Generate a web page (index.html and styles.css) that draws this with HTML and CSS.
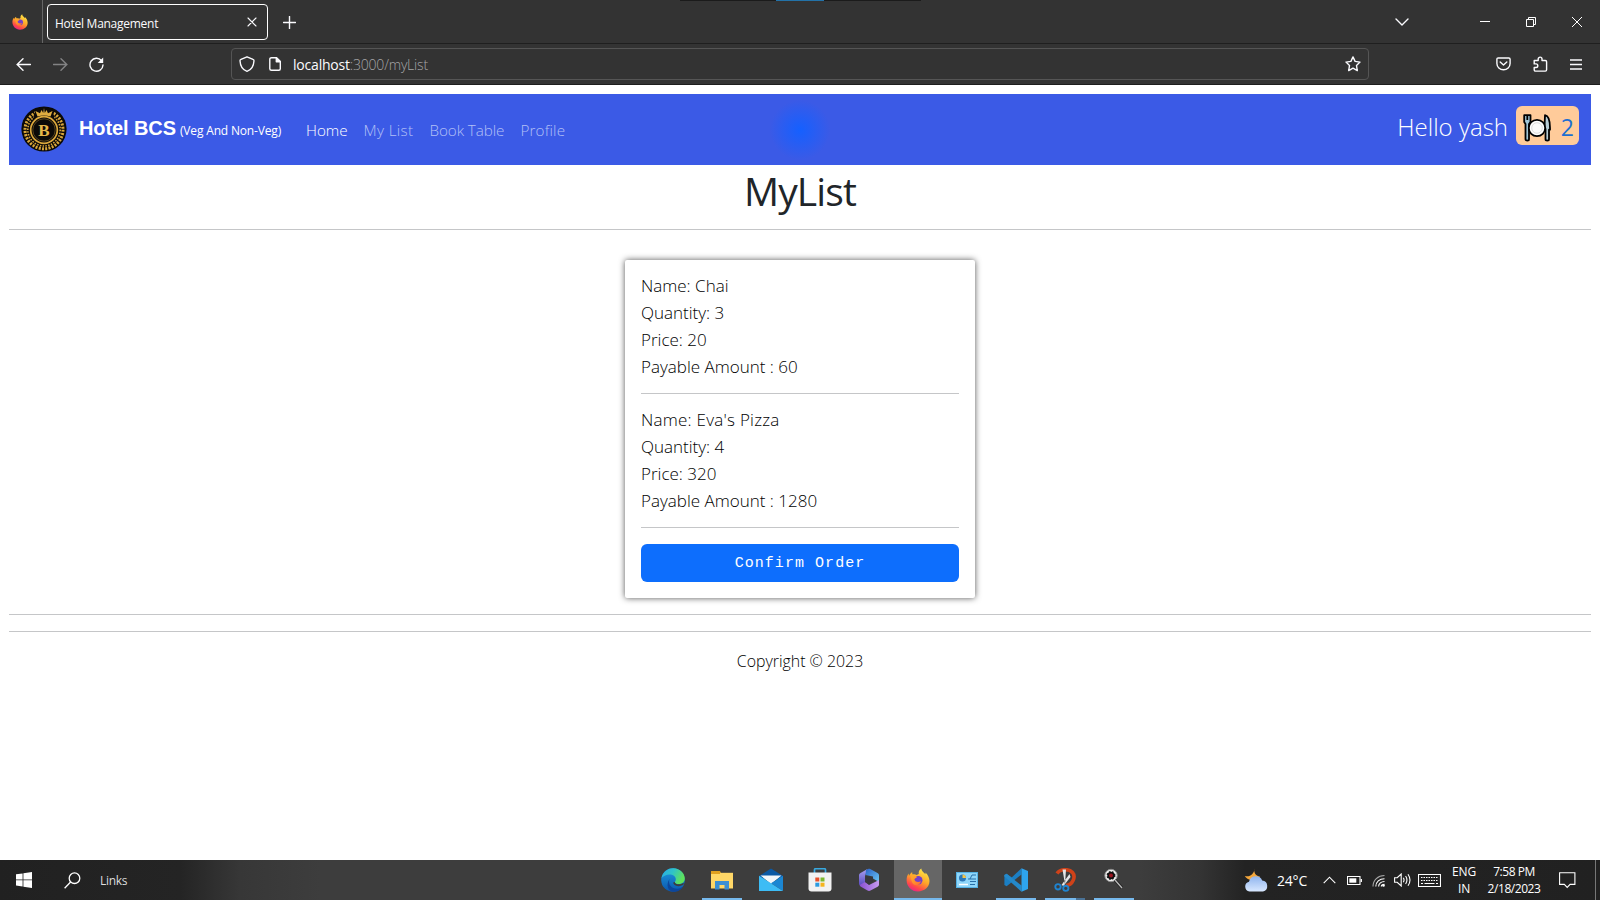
FILE: index.html
```html
<!DOCTYPE html>
<html lang="en">
<head>
<meta charset="utf-8">
<title>Hotel Management</title>
<link rel="stylesheet" href="styles.css">
</head>
<body>
<svg width="0" height="0" class="defs" aria-hidden="true">
  <defs>
    <linearGradient id="fx" x1=".8" y1="0" x2=".3" y2="1"><stop offset="0" stop-color="#fff04a"/><stop offset=".5" stop-color="#ffa428"/><stop offset=".8" stop-color="#ff4a48"/><stop offset="1" stop-color="#e9208a"/></linearGradient>
    <linearGradient id="fxb" x1="0" y1="0" x2="1" y2="1"><stop offset="0" stop-color="#ffb028"/><stop offset="1" stop-color="#ff6a30"/></linearGradient>
    <linearGradient id="edgeG" x1="0" y1="0" x2="1" y2=".4"><stop offset="0" stop-color="#2aa9e8"/><stop offset=".5" stop-color="#2fc3c8"/><stop offset="1" stop-color="#5fe25a"/></linearGradient>
    <linearGradient id="edgeB" x1="0" y1="0" x2="0" y2="1"><stop offset="0" stop-color="#1e9be0"/><stop offset="1" stop-color="#0b56ad"/></linearGradient>
    <linearGradient id="cloud" x1="0" y1="0" x2="0" y2="1"><stop offset="0" stop-color="#8fb4ee"/><stop offset="1" stop-color="#d8e8ff"/></linearGradient>
    <linearGradient id="m1" x1="0" y1="0" x2="0" y2="1"><stop offset="0" stop-color="#a9a0f2"/><stop offset="1" stop-color="#5b4cc0"/></linearGradient>
    <linearGradient id="m2" x1="0" y1="0" x2="1" y2="1"><stop offset="0" stop-color="#2a62c8"/><stop offset="1" stop-color="#6cc8f5"/></linearGradient>
    <linearGradient id="m3" x1="0" y1="0" x2="1" y2="0"><stop offset="0" stop-color="#8a50d0"/><stop offset="1" stop-color="#c79bf0"/></linearGradient>
    <symbol id="firefox" viewBox="0 0 24 24">
      <path d="M12 23.500C5.500 23.500 .8 18.500 .6 12.500.5 9.500 1.500 7 2.600 5.600L3 8c.7-1.700 1.900-3.200 3.200-3.800-.1 1 .1 1.800.5 2.300 1.100-.3 2.800-.2 3.900.5l2.200-1C12.300 3.600 13.500 1.500 15.300.4c.1 2 1.400 3.100 2.900 4.500l1.200 1.300c.2-.7.1-1.200 0-1.700 2.500 2.100 4.100 5.500 4.100 8.600 0 6-5.200 10.400-11.500 10.400z" fill="url(#fx)"/>
      <circle cx="12.300" cy="12.300" r="4.200" fill="#7540c8"/>
      <path d="M5.500 8.500c2-1.500 3.800-.8 5.500.6-.5 1.200-2.600 1.200-2.700 2.500 1 2.600 4 3.200 6.700 1.700-1 3.300-3.500 4.300-5.500 3.800-3-.7-4.800-4.500-4-8.600z" fill="url(#fxb)"/>
    </symbol>
  </defs>
</svg>

<header class="chrome">
  <div class="snap-edge"><i></i></div>
  <div class="tabs">
    <div class="pin"><svg width="16" height="16"><use href="#firefox"/></svg></div>
    <div class="tab"><span class="t-tab">Hotel Management</span>
      <svg width="10" height="10" viewBox="0 0 10 10" class="ln"><path d="M1 1l8 8M9 1l-8 8"/></svg></div>
    <svg class="plus ln" width="13" height="13" viewBox="0 0 13 13"><path d="M6.500 .5v12M.5 6.500h12"/></svg>
    <div class="win">
      <svg class="ln chev" width="14" height="8" viewBox="0 0 14 8"><path d="M1 1l6 6 6-6"/></svg>
      <svg class="thin min" width="10" height="11" viewBox="0 0 10 11"><path d="M0 5.500h10"/></svg>
      <svg class="thin res" width="10" height="10" viewBox="0 0 10 10"><path d="M.5 2.500h7v7h-7zM2.500 2.500v-2h7v7h-2"/></svg>
      <svg class="thin cls" width="10" height="10" viewBox="0 0 10 10"><path d="M0 0l10 10M10 0L0 10"/></svg>
    </div>
  </div>
  <div class="toolbar">
    <div class="nav-btns">
      <svg class="ln" width="15" height="13" viewBox="0 0 15 13"><path d="M14.500 6.500H1M7 .8L1.200 6.500 7 12.200"/></svg>
      <svg class="ln dim" width="15" height="13" viewBox="0 0 15 13"><path d="M.5 6.500H14M8 .8l5.800 5.700L8 12.200"/></svg>
      <svg class="ln" width="15" height="15" viewBox="0 0 15 15"><path d="M12.600 3.700A6.500 6.500 0 1 0 14 8"/><path d="M14.200 .6v5.500H8.700z" fill="#fbfbfe" stroke="none"/></svg>
    </div>
    <div class="url">
      <svg class="ln" width="16" height="16" viewBox="0 0 16 16"><path d="M8 .8l6 2.500c.8.300 1 .8 1 1.400C14.700 10 12 14 8 15.300 4 14 1.300 10 1 4.700c0-.6.300-1.100 1-1.400z"/></svg>
      <svg class="ln page" width="12" height="14" viewBox="0 0 12 14"><path d="M2.500 .7H7.500L11.300 4.500v7.300c0 .9-.6 1.500-1.500 1.500H2.500C1.500 13.300.8 12.700.8 11.800V2.200C.8 1.300 1.500.7 2.500.7z"/><path d="M7.300.7v4h4z" fill="#fbfbfe"/></svg>
      <span class="addr">localhost<span>:3000/myList</span></span>
      <svg class="ln star" width="16" height="16" viewBox="0 0 16 16"><path d="M8 .9l2.100 4.500 4.900.7-3.500 3.500.8 5L8 12.200l-4.300 2.400.8-5L1 6.100l4.900-.7z"/></svg>
    </div>
    <div class="ext">
      <svg class="ln" width="15" height="14" viewBox="0 0 15 14"><path d="M2.200 1h10.600c.8 0 1.300.5 1.300 1.300V6.500a6.600 6.300 0 0 1-13.200 0V2.300C.9 1.500 1.400 1 2.200 1zM4.200 5l3.300 3 3.300-3"/></svg>
      <svg class="ln" width="15" height="16" viewBox="0 0 15 16"><path d="M1.200 4.500h4V3a1.900 1.900 0 0 1 3.800 0v1.500h3.300c.8 0 1.300.4 1.300 1.200v8c0 .9-.5 1.400-1.300 1.400H2.500c-.8 0-1.300-.5-1.300-1.400v-2.200H3a1.800 1.800 0 0 0 0-3.600H1.200z"/></svg>
      <svg class="ln" width="12" height="11" viewBox="0 0 12 11"><path d="M0 1h12M0 5.500h12M0 10h12"/></svg>
    </div>
  </div>
</header>

<main>
  <nav class="navbar">
    <svg class="logo" width="46" height="46" viewBox="0 0 46 46">
      <circle cx="23" cy="23" r="22.600" fill="#0c0a08"/>
      <g fill="none" stroke="#d9a63a">
        <circle cx="23" cy="23.800" r="19" stroke-width="3" stroke-dasharray="2 1.300"/>
        <circle cx="23" cy="23.800" r="16.200" stroke-width="1.600" stroke-dasharray="1.500 1.300"/>
      </g>
      <path d="M12.500 13L14.500 3.500 20 1h6l5.500 2.500 2 9.500z" fill="#0c0a08"/>
      <path d="M16.500 10.500L14.500 5l4.500 2.300L20.500 4l1.700 3L23 2l.8 5 1.700-3L27 7.300 31.500 5l-2 5.500q-6.500-2-13 0z" fill="#e0ad40"/>
      <circle cx="23" cy="24" r="13.300" fill="#0c0a08" stroke="#dba83c" stroke-width="1.700"/>
      <circle cx="23" cy="24" r="11.200" fill="none" stroke="#8a6a28" stroke-width=".6"/>
      <text x="23" y="30" text-anchor="middle" class="logo-b">B</text>
    </svg>
    <span class="brand">Hotel BCS</span><span class="veg">(Veg And Non-Veg)</span>
    <ul class="links"><li class="on">Home</li><li class="mine">My List</li><li class="book">Book Table</li><li>Profile</li></ul>
    <span class="hello">Hello yash</span>
    <span class="badge">
      <svg width="28" height="28" viewBox="0 0 28 28">
        <g stroke="#000" stroke-width="1.800" stroke-linejoin="round">
          <path d="M1.200 1.200H7.500V8L6 10v15.200c0 1.800-3.500 1.800-3.500 0V10L1.200 8z" fill="#9fc6d8"/>
          <path d="M4.300 1v5" fill="none"/>
          <path d="M22 1.200c4 .5 5.200 5 5 14.500h-1v9.500c0 1.800-3.500 1.800-3.500 0V15L21.500 14z" fill="#b7cdd6"/>
          <circle cx="14" cy="14" r="8.200" fill="#fff"/>
        </g>
        <circle cx="14" cy="14" r="5.300" fill="#fafafa" stroke="#dcdcdc"/>
      </svg><b>2</b>
    </span>
  </nav>
  <h1>MyList</h1>
  <hr class="h-title">
  <section class="card">
    <div class="item"><p>Name: Chai</p><p>Quantity: 3</p><p>Price: 20</p><p>Payable Amount : 60</p></div>
    <hr>
    <div class="item"><p class="eva">Name: Eva's Pizza</p><p>Quantity: 4</p><p>Price: 320</p><p>Payable Amount : 1280</p></div>
    <hr>
    <button>Confirm Order</button>
  </section>
  <hr class="h-a"><hr class="h-b">
  <footer>Copyright © 2023</footer>
</main>

<div class="taskbar">
  <div class="start">
    <svg width="16" height="16" viewBox="0 0 16 16" fill="#fff"><path d="M0 2.300l6.600-.9v6.100H0zM7.400 1.200L16 0v7.500H7.400zM0 8.300h6.600v6.200L0 13.600zM7.400 8.300H16V16l-8.600-1.200z"/></svg>
    <svg class="find" width="17" height="17" viewBox="0 0 17 17" fill="none" stroke="#fff" stroke-width="1.300"><circle cx="10.500" cy="6.200" r="5.300"/><path d="M6.600 10L.6 16.300"/></svg>
    <span>Links</span>
  </div>
  <div class="apps">
    <div class="app"><svg width="24" height="24" viewBox="0 0 24 24"><circle cx="12" cy="12" r="11.800" fill="url(#edgeB)"/><path d="M.5 10C2 3.500 7 .2 12.300.2 19 .2 23.800 5.500 23.800 10.500c0 3.300-2.600 5.500-6 5.500-2.500 0-4-1-4-1.800 0-.8 1-1.100 1-3C14.800 8.500 12 6.500 8.500 6.500 5 6.500 2 8.500.5 10z" fill="url(#edgeG)"/><path d="M8.500 11c-2 6 3 11 9.500 9.500 2-.5 3.500-1.500 4-2-2 4-6 5.500-10 5.300C7 23 4.500 17 8.500 11z" fill="#0d469b"/><path d="M13.800 14.200c0 2 5 3 8.500.8l.7 1c-2.500 2.800-8.500 3-10.500-.2-.6-1 .2-2 1.300-1.600z" fill="#3d3d3d"/></svg></div>
    <div class="app run"><svg width="22" height="20" viewBox="0 0 22 20"><path d="M0 1h9l1 2h-10z" fill="#d9981e"/><path d="M0 2.800h22V18.500H0z" fill="#ffd767"/><path d="M0 1h9v3H0z" fill="#e0a020"/><path d="M4 19.500v-8.500h14v8.500h-4.500v-4.500h-5v4.500z" fill="#3a8fd4"/></svg></div>
    <div class="app"><svg width="24" height="24" viewBox="0 0 24 24"><path d="M0 8L12 .5 24 8v3H0z" fill="#0c59a4"/><path d="M1.500 7.500h21L12 16z" fill="#f3f6fa"/><path d="M24 7.700V23L12 15.300z" fill="#1b86d2"/><path d="M0 7.700L24 23H0z" fill="#3dbcf5"/></svg></div>
    <div class="app"><svg width="24" height="24" viewBox="0 0 24 24"><path d="M6.500 6.500V1.800c0-.7.500-1.100 1.100-1.100h8.800c.6 0 1.100.4 1.100 1.100v4.700" fill="none" stroke="#38a9e0" stroke-width="1.700"/><path d="M.5 4.500h23v16c0 2-1.200 3-3 3h-17c-1.800 0-3-1-3-3z" fill="#f2f2f2"/><path d="M7.300 9.500h4v4h-4z" fill="#e8502a"/><path d="M12.500 9.500h4v4h-4z" fill="#7cb82f"/><path d="M7.300 14.700h4v4h-4z" fill="#2b9be0"/><path d="M12.500 14.700h4v4h-4z" fill="#f5b51e"/></svg></div>
    <div class="app"><svg width="22" height="24" viewBox="0 0 22 24"><path d="M9.500 1L2.500 5C1.500 5.500 1 6.500 1 7.500V16c0 1 1 1.500 2 1l4-2.300V8z" fill="url(#m1)"/><path d="M8 2l2-1c.8-.4 1.500-.4 2.200 0L19.500 5c1 .6 1.500 1.500 1.500 2.500V14l-6-3.500V8.500L7.500 7z" fill="url(#m2)"/><path d="M1.500 17l5.500-3 4 3 10-5v4.500c0 1-.5 1.700-1.400 2.200L12.500 22.600c-1 .5-2 .5-3 0L2.500 18.500z" fill="url(#m3)"/><path d="M8 8.500l7 .5v4.500L11 16.500 7.500 14.300z" fill="#37373e"/></svg></div>
    <div class="app run active"><svg width="24" height="24"><use href="#firefox"/></svg></div>
    <div class="app"><svg width="22" height="16" viewBox="0 0 22 16"><rect x=".5" y=".5" width="21" height="15" fill="#8fd6fa" stroke="#56b2e4"/><circle cx="6.500" cy="6" r="3.500" fill="#2d78b8"/><path d="M6.500 6V2.500A3.500 3.500 0 0 1 10 6z" fill="#f2c34b"/><path d="M12 7h2l2-4h4M14 7h6M14 9.500h6" stroke="#276fa8" fill="none"/><path d="M3 12.500h9" stroke="#fff" stroke-width="1.500"/><path d="M14 12.500h5" stroke="#276fa8"/></svg></div>
    <div class="app run"><svg width="24" height="24" viewBox="0 0 24 24"><path d="M17.500.3L7.700 9.600 2.600 5.800.4 7v10l2.200 1.200L17.500 6.500z" fill="#1b7fc4"/><path d="M.4 7l2.200-1.200L17.500 17.500v6.200L.4 8.500z" fill="#2489ca"/><path d="M17.500.2L24 3v18l-6.500 2.800z" fill="#2ea4ee"/></svg></div>
    <div class="app run split"><svg width="22" height="24" viewBox="0 0 22 24"><path d="M3 5.500C6 .8 15 .5 18.500 4.500S19 17 12 17.500" fill="none" stroke="#cf4219" stroke-width="3.600"/><path d="M8.500 1.500h3.500l-1 15zM15.500 6l-8 11 2 1 7-9z" fill="#e4e6e8"/><circle cx="4" cy="18.800" r="2.700" fill="none" stroke="#1f83cf" stroke-width="1.900"/><circle cx="11.800" cy="20.300" r="2.600" fill="none" stroke="#1f83cf" stroke-width="1.900"/></svg></div>
    <div class="app run"><svg class="lens" width="20" height="22" viewBox="0 0 20 22"><circle cx="8" cy="7.500" r="6.200" fill="#eee" stroke="#8d8d8d"/><circle cx="8" cy="7.500" r="3.700" fill="#111" stroke="#111" stroke-width="1.500" stroke-dasharray="1.500 1.500"/><circle cx="8" cy="7.500" r="2" fill="#9c1420"/><path d="M12 12l7 8" stroke="#222" stroke-width="3"/><path d="M12 12l7 8" stroke="#bbb" stroke-width="1.400"/></svg></div>
  </div>
  <div class="tray">
    <svg class="moon" width="25" height="24" viewBox="0 0 25 24"><path d="M10.500.5C9.500 4 11.500 8 16 8.500 14.500 12 9 13.500 5 11.500 3 10.500 1 9 .8 8 6 9.500 10.500 5.500 10.500.5z" fill="#f3a63b"/><path d="M5.500 23.500a5 5 0 0 1-.5-9.800 7 7 0 0 1 13.200-1.200A5.600 5.600 0 0 1 19 23.500z" fill="url(#cloud)"/></svg>
    <span class="temp">24°C</span>
    <svg class="tr up" width="13" height="8" viewBox="0 0 13 8"><path d="M.7 7.200l5.800-6 5.800 6"/></svg>
    <svg class="tr bat" width="15" height="9" viewBox="0 0 15 9"><path d="M.5.500h12.500v8H.5zM14.400 3v3"/><path d="M2.300 2.300h7v4.400h-7z" fill="#fff" stroke="none"/></svg>
    <svg class="tr wifi" width="13" height="13" viewBox="0 0 13 13"><path d="M1 12.500C1 6 6 1.500 12.500 1.500" opacity=".6"/><path d="M3.800 12.500c0-4.500 3.700-7.800 8.700-7.800M6.600 12.500c0-3 2.600-5 5.900-5M9.300 12.500c0-1.500 1.300-2.300 3.200-2.300"/><circle cx="11.500" cy="11.500" r="1.300" fill="#fff" stroke="none"/></svg>
    <svg class="tr vol" width="17" height="14" viewBox="0 0 17 14"><path d="M.6 4.700h2.600l4-3.700v12l-4-3.700H.6zM9.300 4.800q1.500 2.200 0 4.400M11.600 3q2.700 4 0 8M14 1.200q4 5.800 0 11.600"/></svg>
    <svg class="tr kb" width="23" height="13" viewBox="0 0 23 13"><path d="M.5.500h22v12H.5z"/><path d="M3 3.500h17M3 6.500h17" stroke-dasharray="1.500 1"/><path d="M3 9.500h2M6.500 9.500h10M18 9.500h2"/></svg>
    <div class="lang"><span>ENG</span><span>IN</span></div>
    <div class="clock"><span>7:58 PM</span><span>2/18/2023</span></div>
    <svg class="tr note" width="17" height="17" viewBox="0 0 17 17"><path d="M.6.700h15.300v11.700h-4.800L8.200 15.500 5.300 12.400H.6z"/></svg>
    <i class="peek"></i>
  </div>
</div>
</body>
</html>
```
FILE: styles.css
```css
* { box-sizing: border-box; margin: 0; padding: 0; }
body { width: 1600px; height: 900px; overflow: hidden; display: flex; flex-direction: column; background: #fff; color: #212529; font-family: "Open Sans", "Noto Sans", sans-serif; }
svg { display: block; flex: none; }
span, b, p, li { white-space: nowrap; }
.defs { position: absolute; }
.ln { fill: none; stroke: #fbfbfe; stroke-width: 1.4; stroke-linejoin: round; stroke-linecap: round; }
.thin { fill: none; stroke: #fff; stroke-width: 1; }
.dim { opacity: .4; }

/* Browser frame */
.chrome { height: 85px; background: #333; border-bottom: 1px solid #1d1d1d; position: relative; flex: none; color: #fbfbfe; }
.snap-edge { position: absolute; left: 680px; top: 0; width: 241px; height: 1px; background: #1b1b1b; }
.snap-edge i { display: block; width: 48px; height: 1px; margin-left: 96px; background: #2372a8; }
.tabs { height: 44px; border-bottom: 1px solid #1f1f1f; display: flex; }
.pin { width: 43px; height: 43px; border-right: 1px solid #666; padding: 14px 0 0 12px; }
.tab { width: 221px; height: 36px; margin: 4px 0 0 4px; border: 1px solid #fff; border-radius: 4px; display: flex; align-items: center; justify-content: space-between; padding: 0 10px 0 7px; }
.tab svg { stroke-width: 1.1; }
.t-tab { font-size: 12px; letter-spacing: -.27px; padding-top: 2px; }
.plus { margin: 16px 0 0 15px; }
.win { display: flex; align-items: center; margin-left: auto; height: 43px; padding-right: 18px; }
.min { margin-left: 71px; }
.res { margin-left: 36px; }
.cls { margin-left: 36px; }
.toolbar { display: flex; height: 40px; align-items: center; }
.nav-btns { width: 231px; padding-left: 16px; display: flex; align-items: center; gap: 21.5px; }
.url { width: 1138px; height: 32px; border: 1px solid #555; border-radius: 4px; display: flex; align-items: center; padding: 0 7px; }
.page { margin-left: 14px; }
.addr { font-size: 14px; margin-left: 12px; letter-spacing: -.2px; padding-top: 1px; }
.addr span { color: #a6a6a8; font-weight: 300; }
.star { margin-left: auto; }
.ext { display: flex; align-items: center; margin-left: auto; padding-right: 18px; gap: 22px; }

/* Web page */
main { flex: 1; padding: 9px 9px 0; }
.navbar { height: 71px; background: radial-gradient(circle at 791px 36px, #1560ff 0, #3b5ae6 30px); display: flex; align-items: flex-start; padding: 12px 12px 0; color: #fff; }
.logo-b { font: bold 17px "Liberation Serif", serif; fill: #e5b64a; }
.brand { font: bold 20px/46px "Liberation Sans", Arial, sans-serif; letter-spacing: -.1px; margin: -1px 0 0 12px; width: 101px; }
.veg { font-size: 12px; line-height: 46px; width: 126px; margin-top: 2px; letter-spacing: -.17px; }
.links { list-style: none; display: flex; font-weight: 300; font-size: 15.2px; letter-spacing: .2px; line-height: 46px; gap: 16px; margin-top: 1px; color: #b3c0f6; }
.links .mine { letter-spacing: .35px; }
.links .book { letter-spacing: -.05px; }
.links .on { color: #fff; letter-spacing: 0; }
.hello { margin: -1px 8px 0 auto; font-size: 24px; line-height: 44px; font-weight: 300; }
.badge { width: 63px; height: 39px; border-radius: 6px; background: #ffcb9a; display: flex; align-items: center; padding: 4px 5px 0 7px; justify-content: space-between; }
.badge b { font-size: 23px; font-weight: 400; line-height: 35px; color: #1d6fd0; }
h1 { font-size: 39px; letter-spacing: -.9px; font-weight: 400; line-height: 48px; height: 64px; padding-top: 2px; text-align: center; }
hr { border: 0; height: 1px; background: #c5c6c8; }
.card { width: 350px; height: 338px; margin: 30px auto 0; padding: 13px 16px 0; border-radius: 2px; box-shadow: 0 0 6px #555; color: #000; }
.item { font-size: 17px; font-weight: 300; line-height: 27px; height: 121px; margin-top: -1px; }
.eva { letter-spacing: .25px; }
.card hr { margin-bottom: 13px; }
.card .item + hr:last-of-type { margin-bottom: 16px; }
button { display: block; width: 318px; height: 38px; border: 0; border-radius: 6px; background: #0d6efd; color: #fff; font: 15px/38px "Liberation Mono", monospace; letter-spacing: 1.05px; padding-top: 1px; }
.h-a { margin-top: 16px; }
.h-b { margin-top: 16px; }
footer { text-align: center; font-size: 15.9px; line-height: 26px; margin-top: 16px; font-weight: 300; color: #000; }

/* Taskbar */
.taskbar { height: 40px; flex: none; display: flex; background: linear-gradient(90deg, #212121 0, #242424 180px, #373737 240px, #3d3d3d 320px, #3d3d3d 1140px, #343434 1200px, #232323 1245px, #212121 100%); color: #fff; font-size: 12px; }
.start { width: 649px; display: flex; align-items: center; padding-left: 16px; }
.find { margin-left: 32px; }
.start span { margin-left: 19px; color: #ddd; letter-spacing: -.3px; }
.apps { display: flex; gap: 1px; }
.app { width: 48px; height: 40px; display: flex; align-items: center; justify-content: center; position: relative; }
.lens { margin: 0 3px 2px 0; }
.run::after { content: ""; position: absolute; left: 4px; right: 4px; bottom: 0; height: 2px; background: #76b9ed; }
.active { background: #666; }
.active::after { left: 0; right: 0; }
.split::after { background: linear-gradient(90deg, #76b9ed 31px, #4a7296 31px); }
.tray { display: flex; align-items: center; margin-left: auto; }
.tr { fill: none; stroke: #fff; stroke-width: 1.1; }
.temp { font-size: 14px; width: 45px; margin-left: 8px; letter-spacing: -.2px; }
.up { margin-left: 1px; }
.bat { margin-left: 11px; }
.wifi { margin-left: 10px; }
.vol { margin-left: 9px; }
.kb { margin-left: 7px; }
.lang { width: 24px; margin-left: 11px; display: flex; flex-direction: column; align-items: center; line-height: 17px; margin-top: -1px; }
.clock { width: 54px; margin-left: 11px; display: flex; flex-direction: column; align-items: center; line-height: 17px; margin-top: -1px; letter-spacing: -.45px; }
.lang span { letter-spacing: -.2px; }
.note { margin-left: 18px; }
.peek { width: 1px; height: 40px; background: #777; margin: 0 4px 0 19px; }
```
